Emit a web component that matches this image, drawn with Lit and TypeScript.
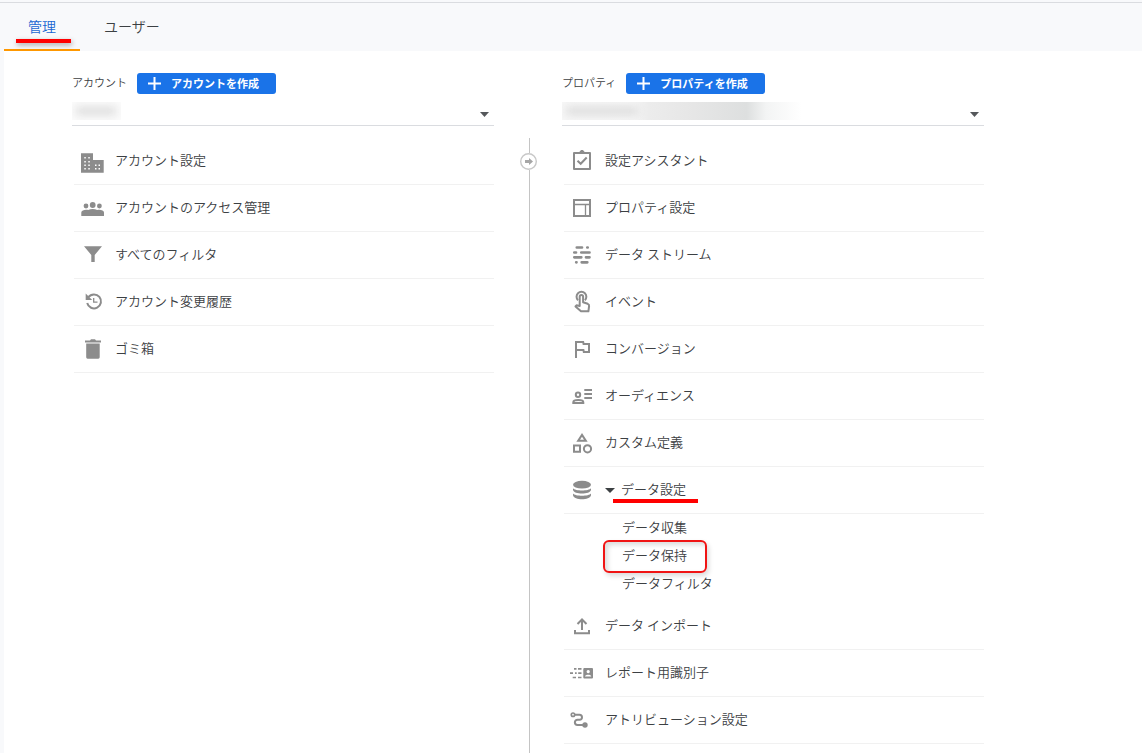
import { LitElement, html, css, svg, nothing } from "lit";
import { customElement, property } from "lit/decorators.js";
import { classMap } from "lit/directives/class-map.js";

const icons: Record<string, unknown> = {
  building: svg`<path fill-rule="evenodd" d="M1 4.3H13V11H23.7V23.7H1Z M4.300 8h1.500v1.500H4.300z M8.300 8h1.500v1.500H8.300z M4.300 12h1.500v1.500H4.300z M8.300 12h1.500v1.500H8.300z M4.300 15.500h1.500v1.500H4.300z M8.300 15.500h1.500v1.500H8.300z M4.300 19h1.500v1.500H4.300z M8.300 19h1.500v1.500H8.300z M15 15.500h1.500v1.500h-1.500z M18.500 15.500h1.500v1.500h-1.500z M15 19h1.500v1.500h-1.500z M18.500 19h1.500v1.500h-1.500z"/>`,
  people: svg`<circle cx="12.7" cy="9" r="2.9"/><circle cx="6" cy="10" r="2.4"/><circle cx="19.4" cy="10" r="2.4"/><path d="M1.3 20v-3.6C1.3 14.6 4 13.8 6 13.8c1 0 1.6.1 2.200.3C9.500 13.400 11 13 12.700 13s3.200.4 4.500 1.100c.6-.2 1.200-.3 2.200-.3 2 0 4.600.8 4.600 2.600V20Z"/>`,
  filter: svg`<path d="M4 3.300H22L14.700 12V19H11.300V12Z"/>`,
  history: svg`<path class="line" d="M7.200 13A7 7 0 1 0 8.400 7.200"/><path d="M5.700 3.500V10H12.200Z"/><path class="line thin" d="M13.700 8v4.200H17.500"/>`,
  trash: svg`<path d="M5 3.500H10L11 2.200H15L16 3.500H21V5.500H5Z M6.200 6.600H19.700V20.300Q19.700 21.700 18.300 21.700H7.600Q6.200 21.700 6.200 20.300Z"/>`,
  assistant: svg`<path class="line" stroke-linejoin="round" d="M4 4H20V20H4Z"/><path class="line" d="M7.500 11.700 10.700 14.800 16.700 8.500"/><path d="M8 3.500C8.800 3 9.500 3 10 2.200 10.800.6 13.200.6 14 2.200 14.500 3 15.200 3 16 3.500Z"/>`,
  layout: svg`<path class="line" d="M4 4H20V20H4Z"/><path class="line thin" d="M4 8.500H20M15.500 8.500V20"/>`,
  stream: svg`<path class="line round" d="M6.800 4.500H12M17.300 4.500H17.700M4.300 9.500H6M11.300 9.500H19.500M4.300 14.300H11.300M16 14.300H19.500M6.200 19.300H6.500M11.700 19.300H17.300"/>`,
  touch: svg`<path class="line" stroke-linejoin="round" d="M9.700 16V6.600a1.700 1.700 0 0 1 3.400 0V12.200l4.600 1.600q1.600.7 1.400 2.200L18.400 21.300H11L5.500 16.500 6.500 15.300Z"/><path class="line" d="M8 10.200A4.900 4.900 0 1 1 14.900 10.200"/>`,
  flag: svg`<path d="M12.360 6l.4 2H18v6h-3.360l-.4-2H7V6h5.360M14 4H5v17h2v-7h5.600l.4 2h7V6h-5.600L14 4z"/>`,
  audience: svg`<circle class="line" cx="8" cy="10.800" r="2.200"/><path class="line" d="M3.300 19V18.200C3.300 16.800 5.700 16 8.300 16s5 .8 5 2.200V19Z M14.300 6H22M14.300 10H22M14.300 14H22"/>`,
  shapes: svg`<path class="line" d="M12 3.900 15.800 9.700H8.200Z M4 14.500H10V20.700H4Z"/><circle class="line" cx="17.500" cy="17.800" r="3.600"/>`,
  database: svg`<ellipse cx="12" cy="6.700" rx="9" ry="3.900"/><path d="M3 10.300C5 13.300 19 13.300 21 10.300V12C20 16.700 4 16.700 3 12Z M3 15.600C5 18.600 19 18.600 21 15.600V17.300C20 22.600 4 22.600 3 17.300Z"/>`,
  upload: svg`<path class="line" d="M12 16V6M7.500 10 12 5.500 16.500 10M5 16V19.200H19V16"/>`,
  identity: svg`<path class="line mid" d="M4 7.800H6.500M8 7.800H11.500M0 12.200H3M5 12.200H6.700M8.200 12.200H11.500M2.700 16.500H6M8 16.500H11.500"/><path fill-rule="evenodd" d="M14.300 7H22Q23 7 23 8V16.500Q23 17.500 22 17.500H14.300Q13.300 17.500 13.300 16.500V8Q13.300 7 14.300 7Z M18.200 9a1.600 1.600 0 1 0 .01 0Z M15 15.500H21.300C21.300 13 15 13 15 15.500Z"/>`,
  route: svg`<circle class="line mid" cx="3" cy="6.700" r="1.700"/><path class="line" d="M5 6.700H9.500A2.500 2.500 0 0 1 9.500 11.700H7.500A2.600 2.600 0 0 0 7.500 17H13"/><circle cx="15" cy="17" r="2.700"/>`,
};

interface Entry {
  icon: string;
  text: string;
  children?: { text: string; boxed?: boolean }[];
}

const accountEntries: Entry[] = [
  { icon: "building", text: "アカウント設定" },
  { icon: "people", text: "アカウントのアクセス管理" },
  { icon: "filter", text: "すべてのフィルタ" },
  { icon: "history", text: "アカウント変更履歴" },
  { icon: "trash", text: "ゴミ箱" },
];

const propertyEntries: Entry[] = [
  { icon: "assistant", text: "設定アシスタント" },
  { icon: "layout", text: "プロパティ設定" },
  { icon: "stream", text: "データ ストリーム" },
  { icon: "touch", text: "イベント" },
  { icon: "flag", text: "コンバージョン" },
  { icon: "audience", text: "オーディエンス" },
  { icon: "shapes", text: "カスタム定義" },
  {
    icon: "database",
    text: "データ設定",
    children: [{ text: "データ収集" }, { text: "データ保持", boxed: true }, { text: "データフィルタ" }],
  },
  { icon: "upload", text: "データ インポート" },
  { icon: "identity", text: "レポート用識別子" },
  { icon: "route", text: "アトリビューション設定" },
];

@customElement("admin-column")
class AdminColumn extends LitElement {
  @property() label = "";
  @property() action = "";
  @property() mask = "";
  @property({ attribute: false }) entries: Entry[] = [];

  static styles = css`
    :host { display: block; min-width: 0; }
    .head { display: flex; align-items: center; gap: 10px; height: 21px; }
    .label { font-size: 11px; line-height: 20px; margin-bottom: 4px; white-space: nowrap; }
    .create {
      display: flex; align-items: center; gap: 10px; height: 21px; padding: 0 17px 0 11px;
      border: 0; border-radius: 3px; background: #1a73e8; color: #fff;
      font: bold 11px/20px "Noto Sans CJK JP", sans-serif; white-space: nowrap; cursor: pointer;
    }
    .caption { padding-bottom: 2px; }
    .plus { width: 13px; height: 13px; stroke: #fff; stroke-width: 2; }
    .picker { position: relative; height: 31px; border-bottom: 1px solid #dadce0; }
    .select { appearance: none; width: 100%; height: 31px; border: 0; background: transparent; font: inherit; }
    .caret { position: absolute; right: 5px; top: 18px; width: 9px; height: 5px; fill: #55585b; pointer-events: none; }
    .mask { position: absolute; left: 0; top: 8px; height: 18px; overflow: hidden; pointer-events: none; }
    .mask.short { width: 49px; background: #fbfbfb; }
    .mask.long {
      width: 240px; max-width: 80%;
      background: linear-gradient(90deg, #f7f7f7 0%, #f5f5f5 30%, #ececec 36%, #e6e6e6 55%, #dddfdf 77%, #f3f4f4 85%, #fff 100%);
    }
    .mask::before { content: ""; position: absolute; left: 4px; top: 5px; height: 8px; background: #dcdcdc; filter: blur(4px); }
    .mask.short::before { width: 40px; }
    .mask.long::before { width: 72px; }
    .list { list-style: none; margin: 12px 0 0; padding: 0 0 0 2px; }
    .row {
      display: flex; align-items: center; height: 46px; padding-left: 6px;
      border-bottom: 1px solid #f1f1f1; color: inherit; text-decoration: none; white-space: nowrap;
    }
    .icon { flex: none; width: 24px; height: 24px; margin-right: 11px; fill: #8c8c8c; overflow: visible; }
    .line { fill: none; stroke: #8c8c8c; stroke-width: 2; }
    .line.mid { stroke-width: 1.7; }
    .line.thin { stroke-width: 1.3; }
    .line.round { stroke-width: 2.7; stroke-linecap: round; }
    .text { position: relative; line-height: 20px; padding-bottom: 2px; }
    .open { width: 10px; height: 5px; margin-right: 6px; fill: #3c4043; }
    .marker { position: absolute; left: -8px; right: -12px; bottom: -2px; height: 4px; background: #f00; }
    .sub { list-style: none; margin: 0; padding: 0 0 5px 58px; }
    .sublink { display: inline-block; position: relative; line-height: 26px; padding-bottom: 2px; color: inherit; text-decoration: none; vertical-align: top; }
    .subitem { height: 28px; }
    .frame {
      position: absolute; left: -19px; right: -20px; top: -2px; bottom: -3px; border: 2px solid #f01414; border-radius: 6px;
      box-shadow: 2px 3px 5px rgba(0, 0, 0, 0.14), inset 3px 3px 5px rgba(0, 0, 0, 0.14);
      box-sizing: border-box; pointer-events: none;
    }
  `;

  private renderEntry(e: Entry) {
    return html`<li>
      <a class="row" href="#">
        <svg class="icon" viewBox="0 0 24 24" aria-hidden="true">${icons[e.icon]}</svg>
        ${e.children ? html`<svg class="open" viewBox="0 0 10 5" aria-hidden="true"><path d="M0 0H10L5 5Z" /></svg>` : nothing}
        <span class="text">${e.text}${e.children ? html`<span class="marker"></span>` : nothing}</span>
      </a>
      ${e.children
        ? html`<ul class="sub">
            ${e.children.map(
              (c) => html`<li class="subitem"><a class="sublink" href="#">${c.text}${c.boxed ? html`<span class="frame"></span>` : nothing}</a></li>`
            )}
          </ul>`
        : nothing}
    </li>`;
  }

  render() {
    return html`
      <div class="head">
        <label class="label" for="picker">${this.label}</label>
        <button class="create" type="button">
          <svg class="plus" viewBox="0 0 13 13" aria-hidden="true"><path d="M6.500 0V13M0 6.500H13" /></svg>
          <span class="caption">${this.action}</span>
        </button>
      </div>
      <div class="picker">
        <select class="select" id="picker"><option></option></select>
        <span class=${classMap({ mask: true, [this.mask]: true })}></span>
        <svg class="caret" viewBox="0 0 9 5" aria-hidden="true"><path d="M0 0H9L4.500 5Z" /></svg>
      </div>
      <ul class="list">${this.entries.map((e) => this.renderEntry(e))}</ul>
    `;
  }
}

@customElement("app-root")
class AppRoot extends LitElement {
  static styles = css`
    :host {
      display: flex; flex-direction: column; box-sizing: border-box; min-height: 100vh;
      background: #f8f9fb; color: #3c4043; font: 350 13px/20px "Noto Sans CJK JP", sans-serif;
    }
    .tabs { display: flex; margin-top: 2px; padding-left: 4px; border-top: 1px solid #dadce0; }
    .tab {
      height: 48px; padding: 0 24px; border: 0; border-bottom: 2px solid transparent; background: none;
      color: #3c4043; font: 350 14px/20px "Noto Sans CJK JP", sans-serif; cursor: pointer;
    }
    .tab.active { position: relative; color: #1967d2; border-bottom-color: #ff9800; }
    .mark { position: absolute; left: 12px; right: 9px; bottom: 6px; height: 4px; background: #f00; box-shadow: 1px 2px 5px rgba(0, 0, 0, 0.35); }
    .panel {
      flex: 1; display: grid; grid-template-columns: minmax(0, 1fr) 68px minmax(0, 1fr);
      margin-left: 4px; padding: 22px 158px 0 68px; background: #fff;
    }
    .divider { display: flex; flex-direction: column; align-items: center; margin-top: 65px; padding-left: 2px; }
    .rule { width: 1px; height: 15px; background: #c4c4c4; }
    .rule.rest { flex: 1; height: auto; }
    .move { display: block; width: 17px; height: 17px; margin-right: 1px; padding: 0; border: 0; background: none; }
    .arrow { display: block; width: 17px; height: 17px; }
  `;

  render() {
    return html`
      <nav class="tabs" role="tablist">
        <button class="tab active" role="tab" aria-selected="true">管理<span class="mark"></span></button>
        <button class="tab" role="tab" aria-selected="false">ユーザー</button>
      </nav>
      <main class="panel">
        <admin-column label="アカウント" action="アカウントを作成" mask="short" .entries=${accountEntries}></admin-column>
        <div class="divider">
          <span class="rule"></span>
          <button class="move" type="button" aria-label="移動">
            <svg class="arrow" viewBox="0 0 17 17" aria-hidden="true">
              <circle cx="8.500" cy="8.500" r="7.800" fill="#fff" stroke="#c8c8c8" stroke-width="1.400" />
              <path d="M5 7H9V5L13 8.500 9 12V10H5Z" fill="#a6a6a6" />
            </svg>
          </button>
          <span class="rule rest"></span>
        </div>
        <admin-column label="プロパティ" action="プロパティを作成" mask="long" .entries=${propertyEntries}></admin-column>
      </main>
    `;
  }
}
